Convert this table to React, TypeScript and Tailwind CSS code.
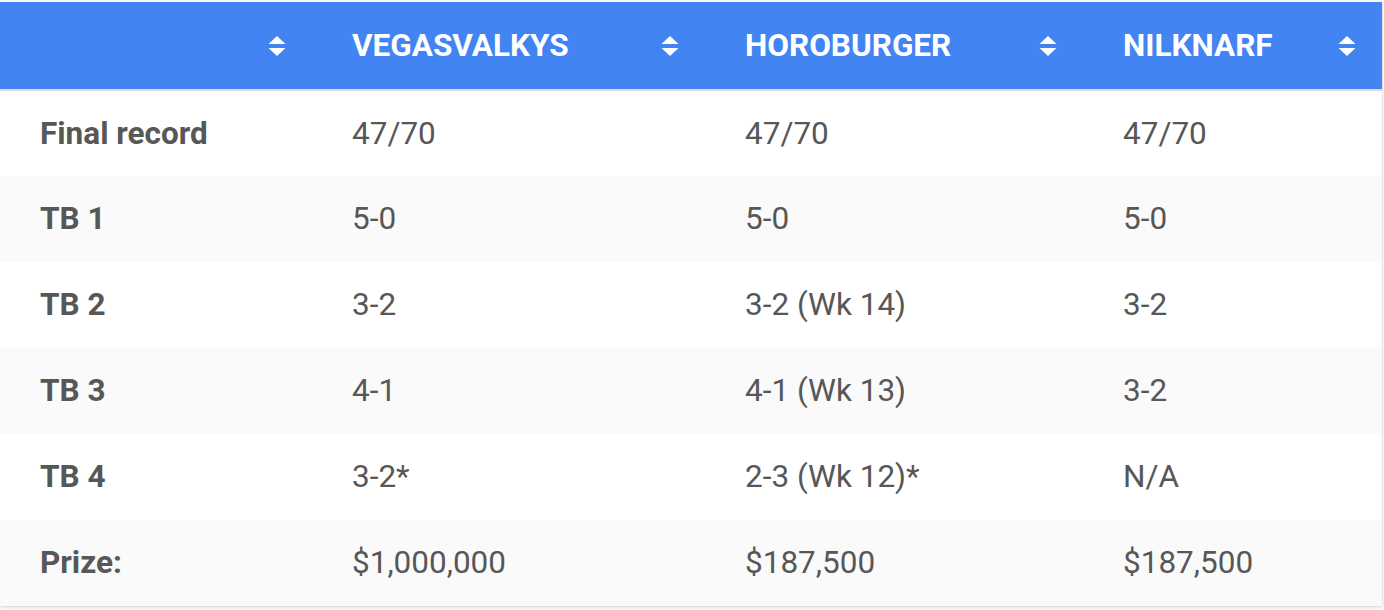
const teams = ["VEGASVALKYS", "HOROBURGER", "NILKNARF"];

const rows = [
  { label: "Final record", values: ["47/70", "47/70", "47/70"] },
  { label: "TB 1", values: ["5-0", "5-0", "5-0"] },
  { label: "TB 2", values: ["3-2", "3-2 (Wk 14)", "3-2"] },
  { label: "TB 3", values: ["4-1", "4-1 (Wk 13)", "3-2"] },
  { label: "TB 4", values: ["3-2*", "2-3 (Wk 12)*", "N/A"] },
  { label: "Prize:", values: ["$1,000,000", "$187,500", "$187,500"] },
];

function SortIcon() {
  return (
    <svg width="18" height="22" viewBox="0 0 18 22" className="shrink-0">
      <path d="M9 1 L17.5 9 L0.5 9 Z" fill="white" />
      <path d="M0.5 13 L17.5 13 L9 21 Z" fill="white" />
    </svg>
  );
}

export default function App() {
  return (
    <div className="w-[1384px] h-[610px] bg-white pt-[2px] font-['Roboto',sans-serif]">
      <table className="w-[1382px] table-fixed border-collapse shadow-[0_2px_3px_rgba(0,0,0,0.12),1px_0_2px_rgba(0,0,0,0.08)]">
        <colgroup>
          <col className="w-[312px]" />
          <col className="w-[393px]" />
          <col className="w-[378px]" />
          <col className="w-[299px]" />
        </colgroup>
        <thead>
          <tr className="bg-[#4384f3] h-[88px] border-b-2 border-[#dcdcdc]">
            <th className="pl-[40px] pr-[26px]">
              <div className="flex items-center justify-end">
                <SortIcon />
              </div>
            </th>
            {teams.map((t) => (
              <th key={t} className="pl-[40px] pr-[26px] text-left">
                <div className="flex items-center justify-between">
                  <span className="text-white font-bold text-[31.5px] leading-none">{t}</span>
                  <SortIcon />
                </div>
              </th>
            ))}
          </tr>
        </thead>
        <tbody>
          {rows.map((r, i) => (
            <tr key={r.label} className={i % 2 === 1 ? "bg-[#fafafa] h-[86px]" : "bg-white h-[86px]"}>
              <td className="pl-[40px] text-[31.5px] font-bold text-[#575757]">{r.label}</td>
              {r.values.map((v, j) => (
                <td key={j} className="pl-[40px] text-[31.5px] text-[#575757]">
                  {v}
                </td>
              ))}
            </tr>
          ))}
        </tbody>
      </table>
    </div>
  );
}
